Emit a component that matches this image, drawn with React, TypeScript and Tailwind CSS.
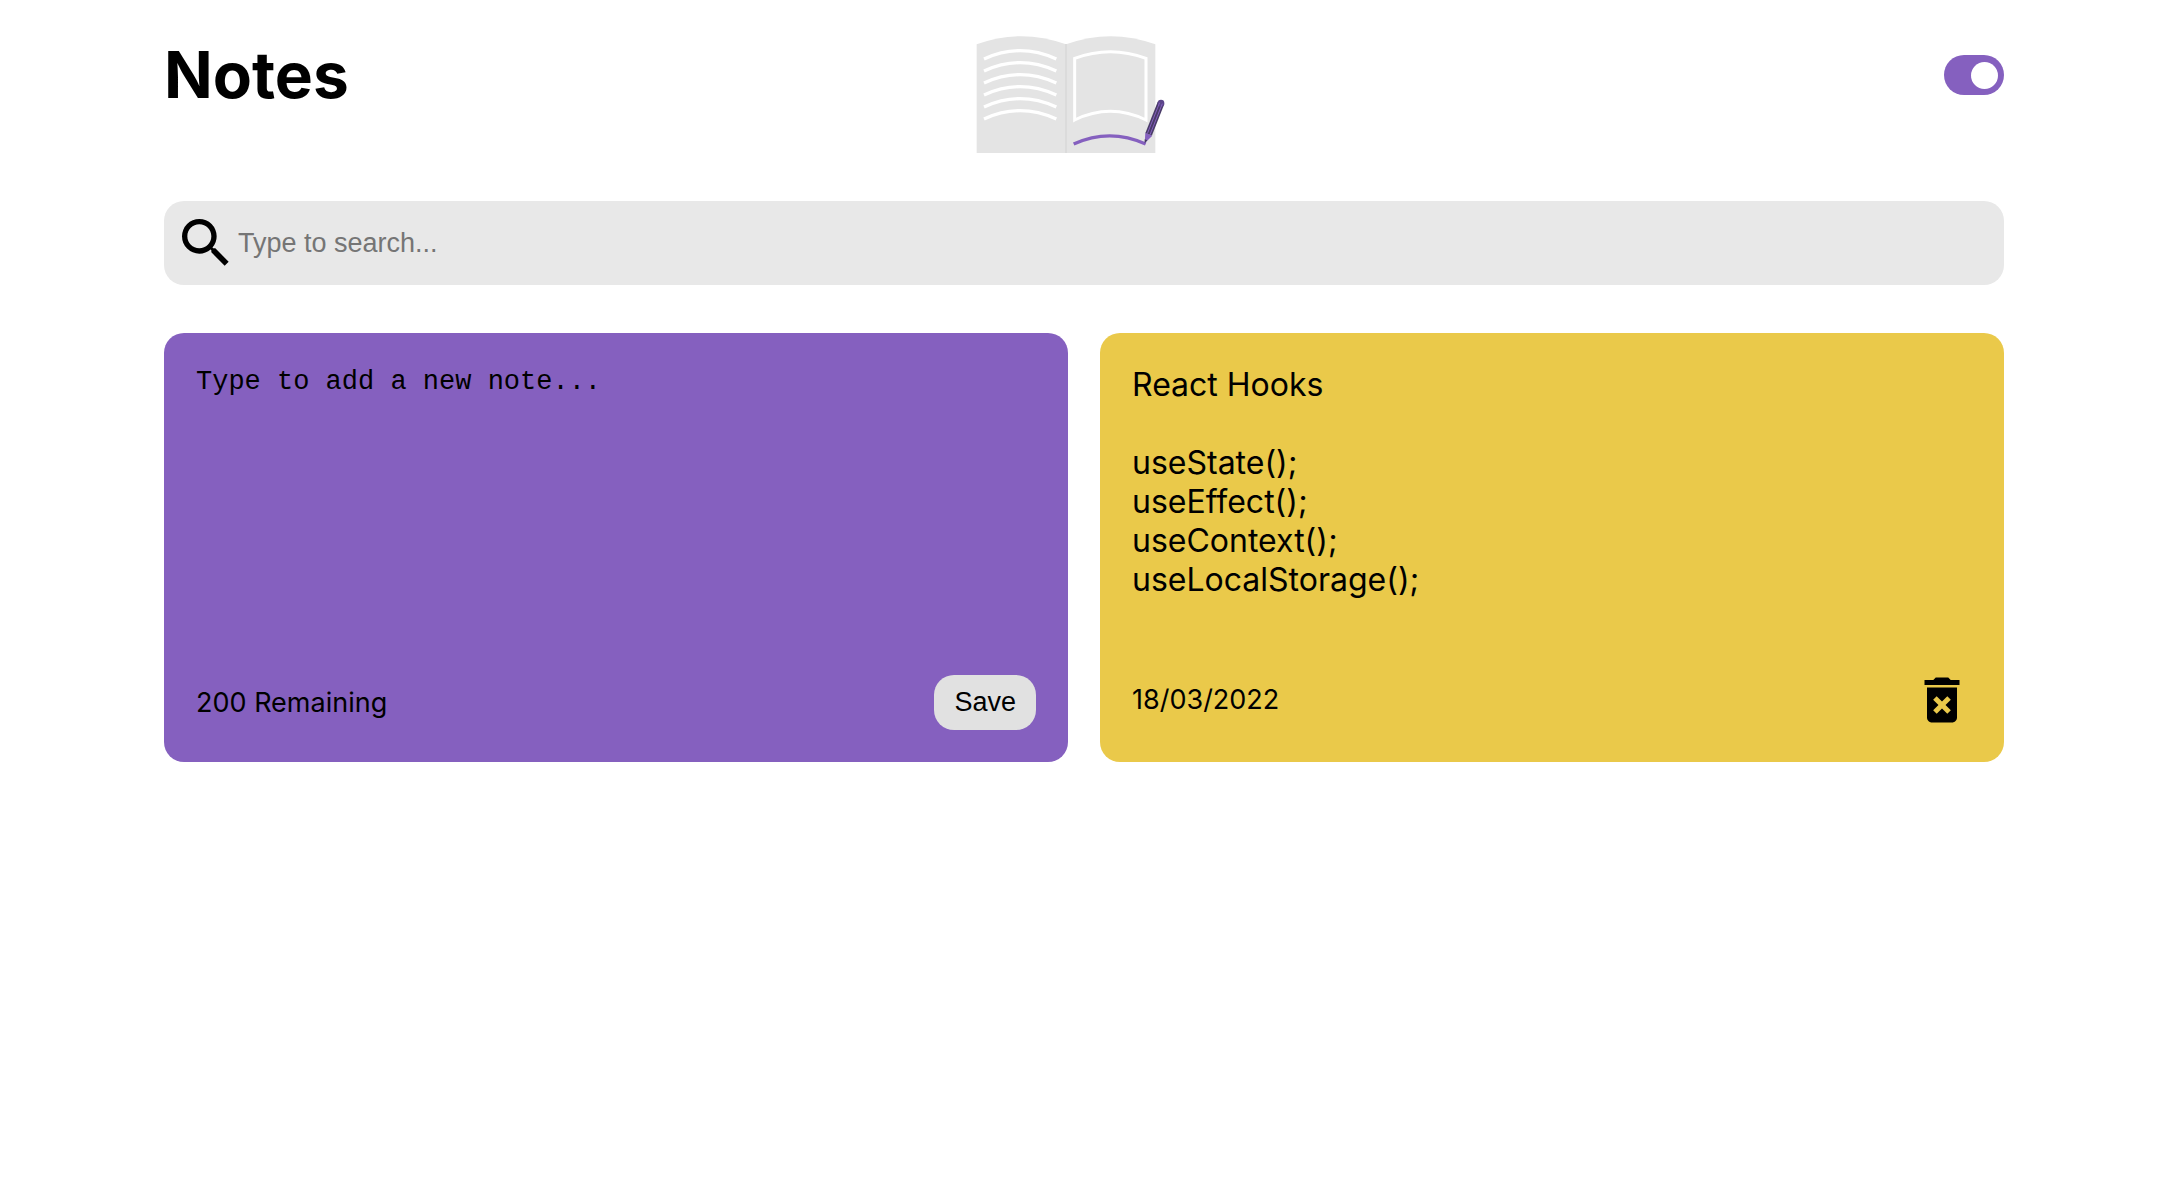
import { useState } from "react";
import { MdDeleteForever, MdSearch } from "react-icons/md";

const LIMIT = 200;

type Note = { id: string; text: string; date: string };

const initialNotes: Note[] = [
  {
    id: "hooks",
    text: "React Hooks\n\nuseState();\nuseEffect();\nuseContext();\nuseLocalStorage();",
    date: "18/03/2022",
  },
];

const lineOffsets = [0, 36, 72, 108, 144, 180];

function BookLogo() {
  return (
    <svg viewBox="48 48 648 351" className="h-[117px] w-[216px]" fill="none" role="img" aria-label="Notebook">
      <path d="M50 73Q184 24 318 73V399H50Z" fill="#e4e4e4" />
      <path d="M318 73Q452 24 586 73V399H318Z" fill="#e4e4e4" />
      <path d="M318 72V399" stroke="#d9d9d9" strokeWidth="5" />
      {lineOffsets.map((y) => (
        <path key={y} d="M72 117Q180 67 289 117" transform={`translate(0 ${y})`} stroke="#fff" strokeWidth="10" />
      ))}
      <path d="M344 115Q451 75 558 115V300Q451 248 344 300Z" stroke="#fff" strokeWidth="9" />
      <path d="M341 372Q449 323 557 372" stroke="#8560bf" strokeWidth="10" />
      <g>
        <path d="M556 338L554 370L577 347Z" fill="#8560bf" />
        <path d="M554 358V370L562 361Z" fill="#413a5e" />
        <path d="M566 343L603 249" stroke="#493b68" strokeWidth="21" />
        <path d="M603 249V249.5" stroke="#5b458a" strokeWidth="20" strokeLinecap="round" />
        <path d="M562 341L599 248M570 344L607 251" stroke="#8560bf" strokeWidth="3" />
      </g>
    </svg>
  );
}

export default function App() {
  const [notes, setNotes] = useState(initialNotes);
  const [draft, setDraft] = useState("");
  const [query, setQuery] = useState("");
  const [light, setLight] = useState(true);

  const save = () => {
    if (!draft.trim()) return;
    setNotes([...notes, { id: String(Date.now()), text: draft, date: new Date().toLocaleDateString("en-GB") }]);
    setDraft("");
  };

  const shown = notes.filter((n) => n.text.toLowerCase().includes(query.toLowerCase()));

  return (
    <div className={`min-h-screen pr-[14px] font-[Inter,sans-serif] [font-optical-sizing:none] ${light ? "bg-white text-black" : "bg-neutral-900 text-black"}`}>
      <main className="mx-auto max-w-[1920px] px-10 pt-9 pb-10">
        <header className="grid grid-cols-[1fr_auto_1fr] items-start">
          <h1 className={`text-[64px] leading-[78px] font-bold ${light ? "text-black" : "text-white"}`}>Notes</h1>
          <BookLogo />
          <label className="flex h-[78px] items-center justify-self-end">
            <input
              type="checkbox"
              checked={light}
              onChange={(e) => setLight(e.target.checked)}
              aria-label="Light mode"
              className="flex h-10 w-15 cursor-pointer appearance-none items-center rounded-full bg-gray-300 px-[6px] before:size-[27px] before:rounded-full before:bg-white checked:justify-end checked:bg-[#8560bf]"
            />
          </label>
        </header>

        <div className="mt-12 flex items-center rounded-[20px] bg-[#e8e8e8] p-[10px]">
          <MdSearch className="size-16 shrink-0" aria-hidden="true" />
          <input
            type="text"
            value={query}
            onChange={(e) => setQuery(e.target.value)}
            placeholder="Type to search..."
            aria-label="Search notes"
            className="h-16 w-full bg-transparent font-['Liberation_Sans',sans-serif] text-[27px] outline-none placeholder:text-[#757575]"
          />
        </div>

        <section className="mt-12 grid grid-cols-[repeat(auto-fill,minmax(min(500px,100%),1fr))] gap-8 min-[1600px]:grid-cols-2">
          <div className="flex min-h-[429px] flex-col rounded-[20px] bg-[#8560bf] p-8">
            <textarea
              value={draft}
              maxLength={LIMIT}
              onChange={(e) => setDraft(e.target.value)}
              placeholder="Type to add a new note..."
              aria-label="New note"
              className="w-full grow resize-none bg-transparent font-['Liberation_Mono',monospace] text-[27px] leading-[34px] outline-none placeholder:text-black"
            />
            <div className="flex items-center justify-between">
              <small className="text-[27px] leading-8">{LIMIT - draft.length} Remaining</small>
              <button
                type="button"
                onClick={save}
                className="cursor-pointer rounded-[20px] bg-[#e1e1e1] px-5 py-3 font-['Liberation_Sans',sans-serif] text-[27px] leading-[31px]"
              >
                Save
              </button>
            </div>
          </div>

          {shown.map((note) => (
            <article key={note.id} className="flex min-h-[429px] flex-col justify-between rounded-[20px] bg-[#eac94a] p-8">
              <p className="text-[32px] leading-[39px] whitespace-pre-wrap">{note.text}</p>
              <div className="flex items-center justify-between">
                <small className="text-[27px] leading-8">{note.date}</small>
                <button
                  type="button"
                  aria-label="Delete note"
                  onClick={() => setNotes(notes.filter((n) => n.id !== note.id))}
                  className="cursor-pointer"
                >
                  <MdDeleteForever className="size-15" />
                </button>
              </div>
            </article>
          ))}
        </section>
      </main>
    </div>
  );
}
